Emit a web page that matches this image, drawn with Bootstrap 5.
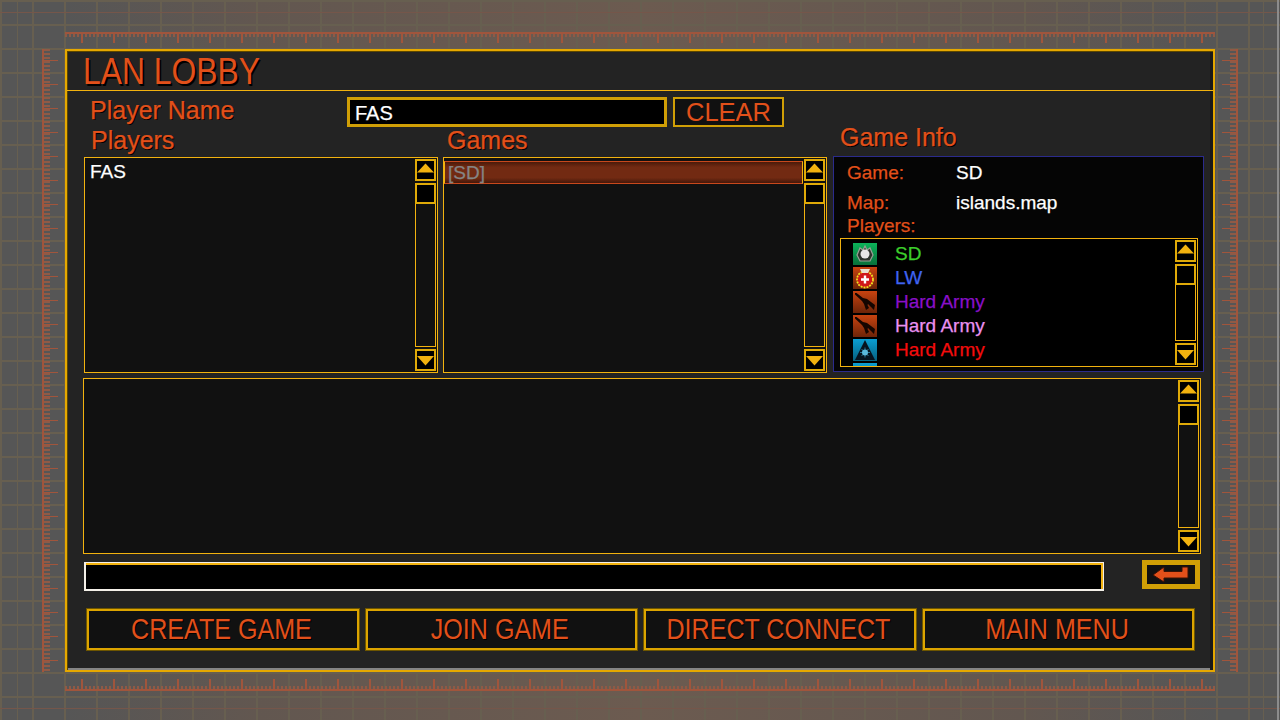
<!DOCTYPE html>
<html lang="en">
  <head>
    <meta charset="utf-8" />
    <meta name="viewport" content="width=device-width, initial-scale=1" />
    <title>LAN Lobby</title>
    <link
      href="https://cdn.jsdelivr.net/npm/bootstrap@5.3.3/dist/css/bootstrap.min.css"
      rel="stylesheet"
    />
    <style>
      :root {
        --gold: #f2b20f;
        --gold-dim: #d09f06;
        --rust: #e2501a;
        --tick: #a0553c;
        --line: #675f50;
      }
      html,
      body {
        height: 100%;
        overflow: hidden;
      }
      body {
        font-family: "Liberation Sans", Arial, sans-serif;
        background-color: #555;
        background-image:
          linear-gradient(90deg, transparent 1277px, #8c8c8c 1277px, #8c8c8c 1279px, transparent 1279px),
          linear-gradient(90deg, transparent 17px, var(--line) 17px, var(--line) 18px, transparent 18px),
          linear-gradient(90deg, transparent 1263px, var(--line) 1263px, var(--line) 1264px, transparent 1264px),
          linear-gradient(transparent 12px, #75564a 12px, #75564a 13px, transparent 13px),
          linear-gradient(transparent 708px, #75564a 708px, #75564a 709px, transparent 709px),
          linear-gradient(90deg, var(--line) 2px, transparent 2px),
          linear-gradient(var(--line) 2px, transparent 2px),
          linear-gradient(90deg, #565656 5%, #625750 20%, #6c5b50 50%, #625750 80%, #565656 95%);
        background-size: auto, auto, auto, auto, auto, 32px 100%, 100% 24px, auto;
      }
      .screen {
        width: 1280px;
        height: 720px;
        display: grid;
        grid-template-columns: 42px 23px 1150px 23px 42px;
        grid-template-rows: 32px 17px 623px 19px 29px;
      }
      .ruler-top {
        grid-column: 3;
        grid-row: 2;
        background:
          linear-gradient(var(--tick), var(--tick)) 0 0 / 100% 2px no-repeat,
          linear-gradient(90deg, var(--tick) 2px, transparent 2px) 16px 0 / 32px 11px repeat-x,
          linear-gradient(90deg, #8f5a46 2px, transparent 2px) 0 0 / 4px 5px repeat-x;
      }
      .ruler-bottom {
        grid-column: 3;
        grid-row: 4;
        background:
          linear-gradient(var(--tick), var(--tick)) 0 100% / 100% 2px no-repeat,
          linear-gradient(90deg, var(--tick) 2px, transparent 2px) 16px 100% / 32px 12px repeat-x,
          linear-gradient(90deg, #8f5a46 2px, transparent 2px) 0 100% / 4px 5px repeat-x;
      }
      .ruler-left,
      .ruler-right {
        grid-row: 3;
        width: 16px;
      }
      .ruler-left {
        grid-column: 1 / span 2;
        justify-self: end;
        margin-right: 7px;
        background:
          linear-gradient(var(--tick), var(--tick)) 0 0 / 2px 100% no-repeat,
          linear-gradient(var(--tick) 1px, transparent 1px) 0 11px / 16px 24px repeat-y,
          linear-gradient(#8f5a46 2px, transparent 2px) 0 0 / 8px 4px repeat-y;
      }
      .ruler-right {
        grid-column: 4 / span 2;
        justify-self: start;
        margin-left: 7px;
        background:
          linear-gradient(var(--tick), var(--tick)) 100% 0 / 2px 100% no-repeat,
          linear-gradient(var(--tick) 1px, transparent 1px) 100% 11px / 16px 24px repeat-y,
          linear-gradient(#8f5a46 2px, transparent 2px) 100% 0 / 8px 4px repeat-y;
      }
      .lobby {
        grid-column: 3;
        grid-row: 3;
        border: 2px solid #e6a800;
        background: #232323;
        box-shadow:
          inset 1px 1px 0 #5c4700,
          inset -3px 0 0 #1a1a1a,
          inset 0 -2px 0 #858585;
      }
      .lobby-head {
        height: 40px;
        border-bottom: 1px solid var(--gold);
        padding: 0 0 0 16px;
      }
      .lobby-title {
        display: inline-block;
        font-size: 37px;
        line-height: 41px;
        color: var(--rust);
        text-shadow: 2px 2px 0 #000;
        transform: scaleX(0.86);
        transform-origin: left center;
      }
      .lobby-body {
        padding: 6px 9px 0 17px;
      }
      .lbl {
        font-size: 25px;
        height: 30px;
        line-height: 26px;
        color: var(--rust);
        text-shadow: 1px 1px 0 #000;
        -webkit-text-stroke: 0.25px var(--rust);
      }
      .name-lbl {
        width: 263px;
        padding-left: 6px;
      }
      .name-input {
        width: 320px;
        height: 30px;
        background: #000;
        border: 3px solid var(--gold-dim);
        color: #fff;
        font-size: 20px;
        line-height: 26px;
        padding: 0 5px;
        margin-right: 6px;
        -webkit-text-stroke: 0.25px #fff;
      }
      .clear-btn {
        width: 111px;
        height: 30px;
        border: 2px solid var(--gold-dim);
        background: #111;
        color: var(--rust);
        font-size: 25.5px;
        line-height: 26px;
        text-align: center;
      }
      .cols {
        height: 246px;
      }
      .col-players {
        width: 354px;
        margin-right: 5px;
      }
      .col-games {
        width: 384px;
        margin-right: 6px;
      }
      .col-info {
        width: 371px;
      }
      .col-players .lbl {
        padding-left: 7px;
      }
      .col-games .lbl {
        padding-left: 4px;
      }
      .col-info .lbl {
        padding-left: 7px;
        height: 29px;
        line-height: 20px;
      }
      .listbox {
        height: 216px;
        display: flex;
        border: 1px solid var(--gold);
        background: #111;
      }
      .list-rows {
        flex: 1 1 auto;
        min-width: 0;
        overflow: hidden;
        color: #fff;
        font-size: 19px;
        line-height: 24px;
        -webkit-text-stroke: 0.25px;
      }
      .col-players .list-rows {
        padding: 2px 5px;
      }
      .col-games .list-rows {
        padding: 3px 0 0 0;
      }
      .sel-row {
        height: 23px;
        line-height: 21px;
        padding-left: 3px;
        color: #858585;
        border: 1px solid #c8481c;
        border-left-color: var(--gold);
        border-right-color: var(--gold);
        background: linear-gradient(#4a1a0a, #722a12 25%, #722a12 75%, #45180a);
      }
      .sbar {
        flex: 0 0 auto;
        width: 21px;
        margin: 1px;
        display: flex;
        flex-direction: column;
      }
      .sb-btn {
        height: 22px;
        flex: 0 0 auto;
        border: 2px solid #e0aa08;
        background: #000;
        display: flex;
      }
      .sb-btn svg {
        width: 17px;
        height: 18px;
        fill: var(--gold);
      }
      .sb-thumb {
        height: 21px;
        flex: 0 0 auto;
        margin-top: 2px;
        border: 2px solid #e0aa08;
        background: #000;
      }
      .sb-track {
        flex: 1 1 auto;
        border: 1px solid var(--gold);
        border-top: 0;
        margin-bottom: 2px;
      }
      .info-box {
        height: 216px;
        border: 1px solid #2b2b8c;
        background: #050505;
        padding: 4px 5px 4px 6px;
        display: flex;
        flex-direction: column;
      }
      .info-row {
        display: flex;
        flex: 0 0 auto;
        font-size: 19px;
        color: #fff;
        line-height: 24px;
        -webkit-text-stroke: 0.25px;
      }
      .info-map {
        margin-top: 6px;
      }
      .info-plrs {
        margin-top: -1px;
      }
      .info-key {
        width: 116px;
        padding-left: 7px;
        color: var(--rust);
        text-shadow: 1px 1px 0 #000;
      }
      .info-list {
        flex: 1 1 auto;
        min-height: 0;
        display: flex;
        border: 1px solid var(--gold);
        background: #000;
      }
      .info-list .list-rows {
        padding: 4px 0 0 12px;
        line-height: 22px;
      }
      .plr-row {
        height: 24px;
        display: flex;
        gap: 18px;
      }
      .plr-ico {
        width: 24px;
        height: 22px;
        flex: 0 0 auto;
      }
      .plr-ico svg {
        display: block;
        width: 24px;
        height: 22px;
      }
      .ico-green {
        background: linear-gradient(#0cb35a, #07703a);
      }
      .ico-red {
        background: linear-gradient(#c84310, #6d2408);
      }
      .ico-blue {
        background: linear-gradient(#0a9ed2, #06607f);
      }
      .chat-box {
        height: 176px;
        margin: 5px 0 0 -1px;
        width: 1118px;
      }
      .chat-area {
        flex: 1 1 auto;
      }
      .say-row {
        margin-top: 8px;
        height: 29px;
      }
      .say-input {
        width: 1020px;
        height: 29px;
        background: #000;
        border-style: solid;
        border-color: #f4f0e8;
        border-width: 1px 1px 2px 2px;
        box-shadow:
          inset 0 2px 0 var(--gold),
          inset -2px 0 0 var(--gold);
      }
      .send-btn {
        width: 58px;
        height: 29px;
        margin: -2px 0 0 38px;
        background: #111;
        border: 5px solid var(--gold-dim);
        display: flex;
        align-items: center;
        justify-content: center;
      }
      .menu-grid {
        display: grid;
        grid-template-columns: repeat(4, 1fr);
        gap: 5px;
        width: 1109px;
        margin: 17px 0 0 2px;
      }
      .menu-btn {
        height: 43px;
        background: #111;
        border: 3px solid #dca400;
        outline: 1px solid #6e5600;
        outline-offset: -1px;
        color: var(--rust);
        font-size: 29px;
        line-height: 36px;
        text-align: center;
        text-shadow: 1px 1px 0 #000;
      }
      .menu-btn span {
        display: inline-block;
        transform: scaleX(0.865);
        white-space: nowrap;
        margin-left: -2px;
      }
    </style>
  </head>
  <body>
    <svg width="0" height="0" class="d-block">
      <symbol id="up" viewBox="0 0 17 18"><polygon points="8.5,2.5 17,11.5 0,11.5" /></symbol>
      <symbol id="down" viewBox="0 0 17 18"><polygon points="0,5 17,5 8.5,14.5" /></symbol>
      <symbol id="rifle" viewBox="0 0 24 22"><polygon fill="#140500" points="2,2 3.5,2 10,7 14,8 22,14 21,19 18,16 15,13 14.5,14 16,17 13,19 11,13 9,10 2,3.5" /></symbol>
    </svg>

    <div class="screen">
      <div class="ruler-top"></div>
      <div class="ruler-left"></div>
      <div class="lobby">
        <div class="lobby-head"><span class="lobby-title">LAN LOBBY</span></div>
        <div class="lobby-body">
          <div class="d-flex align-items-center">
            <div class="lbl name-lbl">Player Name</div>
            <div class="name-input">FAS</div>
            <div class="clear-btn">CLEAR</div>
          </div>

          <div class="d-flex cols">
            <div class="col-players">
              <div class="lbl">Players</div>
              <div class="listbox">
                <div class="list-rows">FAS</div>
                <div class="sbar">
                  <div class="sb-btn"><svg><use href="#up" /></svg></div>
                  <div class="sb-thumb"></div>
                  <div class="sb-track"></div>
                  <div class="sb-btn"><svg><use href="#down" /></svg></div>
                </div>
              </div>
            </div>
            <div class="col-games">
              <div class="lbl">Games</div>
              <div class="listbox">
                <div class="list-rows"><div class="sel-row">[SD]</div></div>
                <div class="sbar">
                  <div class="sb-btn"><svg><use href="#up" /></svg></div>
                  <div class="sb-thumb"></div>
                  <div class="sb-track"></div>
                  <div class="sb-btn"><svg><use href="#down" /></svg></div>
                </div>
              </div>
            </div>
            <div class="col-info">
              <div class="lbl">Game Info</div>
              <div class="info-box">
                <div class="info-row"><div class="info-key">Game:</div><div>SD</div></div>
                <div class="info-row info-map"><div class="info-key">Map:</div><div>islands.map</div></div>
                <div class="info-row info-plrs"><div class="info-key">Players:</div></div>
                <div class="info-list">
                  <div class="list-rows">
                    <div class="plr-row" style="color: #3ccf2c">
                      <div class="plr-ico ico-green">
                        <svg viewBox="0 0 24 22"><path d="M4 12 L7 5 L10 7 L12 3 L14 7 L17 5 L20 12 L17 18 H7 Z" fill="#2c332c" stroke="#9aa095" stroke-width="1.2" /><circle cx="12" cy="11" r="4.5" fill="#e6e6e6" /></svg>
                      </div>
                      <div>SD</div>
                    </div>
                    <div class="plr-row" style="color: #3f63f0">
                      <div class="plr-ico ico-red">
                        <svg viewBox="0 0 24 22"><circle cx="12" cy="12.5" r="8" fill="#d01818" stroke="#f0e020" stroke-width="1.8" stroke-dasharray="2 1" /><path d="M12 8.5v8M8 12.5h8" stroke="#fff" stroke-width="2.4" /><path d="M7 2h10l-2 4h-6z" fill="#e8e0d0" /></svg>
                      </div>
                      <div>LW</div>
                    </div>
                    <div class="plr-row" style="color: #8a0fc8">
                      <div class="plr-ico ico-red"><svg><use href="#rifle" /></svg></div>
                      <div>Hard Army</div>
                    </div>
                    <div class="plr-row" style="color: #ea90f0">
                      <div class="plr-ico ico-red"><svg><use href="#rifle" /></svg></div>
                      <div>Hard Army</div>
                    </div>
                    <div class="plr-row" style="color: #f40c0c">
                      <div class="plr-ico ico-blue">
                        <svg viewBox="0 0 24 22"><polygon points="12,1 22,21 2,21" fill="#06121e" /><path d="M12 8.5v10M7 13.5h10M8.5 10l7 7M15.5 10l-7 7" stroke="#2e7f9f" stroke-width=".9" /><circle cx="12" cy="13.5" r="3" fill="#5ab8dc" /></svg>
                      </div>
                      <div>Hard Army</div>
                    </div>
                    <div class="plr-row">
                      <div class="plr-ico ico-blue"></div>
                    </div>
                  </div>
                  <div class="sbar">
                    <div class="sb-btn"><svg><use href="#up" /></svg></div>
                    <div class="sb-thumb"></div>
                    <div class="sb-track"></div>
                    <div class="sb-btn"><svg><use href="#down" /></svg></div>
                  </div>
                </div>
              </div>
            </div>
          </div>

          <div class="listbox chat-box">
            <div class="chat-area"></div>
            <div class="sbar">
              <div class="sb-btn"><svg><use href="#up" /></svg></div>
              <div class="sb-thumb"></div>
              <div class="sb-track"></div>
              <div class="sb-btn"><svg><use href="#down" /></svg></div>
            </div>
          </div>

          <div class="d-flex say-row">
            <div class="say-input"></div>
            <div class="send-btn">
              <svg width="38" height="17" viewBox="0 0 38 17">
                <polygon points="1,9 12,1 12,5.5 30,5.5 30,1 36,1 36,12 12,12 12,16" fill="#e2501a" stroke="#3a1205" stroke-width="1" />
              </svg>
            </div>
          </div>

          <div class="menu-grid">
            <div class="menu-btn"><span>CREATE GAME</span></div>
            <div class="menu-btn"><span>JOIN GAME</span></div>
            <div class="menu-btn"><span>DIRECT CONNECT</span></div>
            <div class="menu-btn"><span>MAIN MENU</span></div>
          </div>
        </div>
      </div>
      <div class="ruler-right"></div>
      <div class="ruler-bottom"></div>
    </div>

    <script src="https://cdn.jsdelivr.net/npm/bootstrap@5.3.3/dist/js/bootstrap.bundle.min.js"></script>
  </body>
</html>
